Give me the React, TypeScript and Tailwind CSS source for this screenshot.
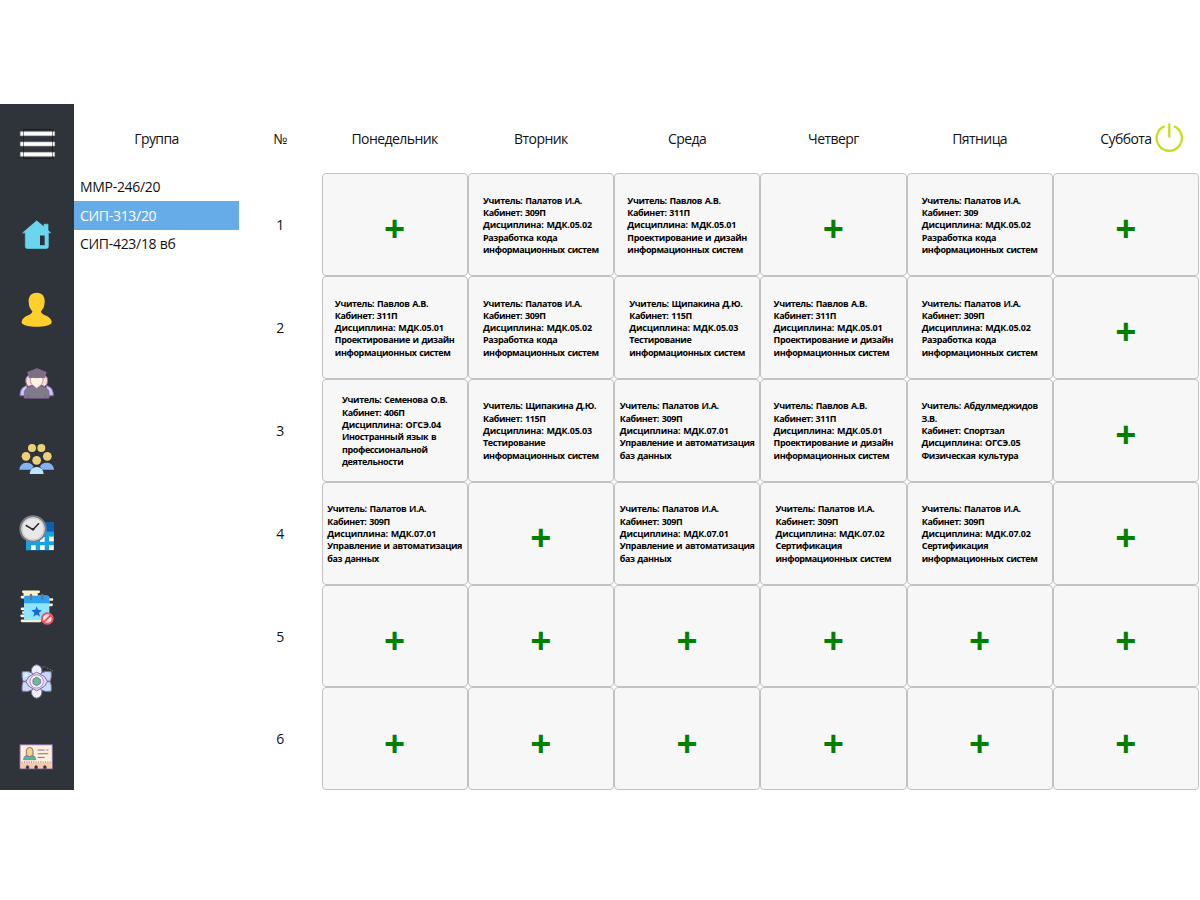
import type { ReactNode } from "react";

const days = ["Понедельник", "Вторник", "Среда", "Четверг", "Пятница", "Суббота"];
const groups = ["ММР-246/20", "СИП-313/20", "СИП-423/18 вб"];

const lesson = (teacher: string, room: string, code: string, ...title: string[]) => [
  ...teacher.split("|").map((t, i) => (i === 0 ? `Учитель: ${t}` : t)),
  `Кабинет: ${room}`,
  `Дисциплина: ${code}`,
  ...title,
];

const IS = "информационных систем";
const dev = (room = "309П") => lesson("Палатов И.А.", room, "МДК.05.02", "Разработка кода", IS);
const design = lesson("Павлов А.В.", "311П", "МДК.05.01", "Проектирование и дизайн", IS);
const testing = lesson("Щипакина Д.Ю.", "115П", "МДК.05.03", "Тестирование", IS);
const control = lesson("Палатов И.А.", "309П", "МДК.07.01", "Управление и автоматизация", "баз данных");
const cert = lesson("Палатов И.А.", "309П", "МДК.07.02", "Сертификация", IS);
const foreign = lesson("Семенова О.В.", "406П", "ОГСЭ.04", "Иностранный язык в", "профессиональной", "деятельности");
const sport = lesson("Абдулмеджидов|З.В.", "Спортзал", "ОГСЭ.05", "Физическая культура");

const rows: (string[] | null)[][] = [
  [null, dev(), design, null, dev("309"), null],
  [design, dev(), testing, design, dev(), null],
  [foreign, testing, control, design, sport, null],
  [control, null, control, cert, cert, null],
  [null, null, null, null, null, null],
  [null, null, null, null, null, null],
];

function Icon({ top, children }: { top: number; children: ReactNode }) {
  return (
    <svg className="h-[74.4px] w-[74px] shrink-0" viewBox={`0 ${top} 222 223.2`}>
      {children}
    </svg>
  );
}

function Sidebar() {
  return (
    <nav className="flex h-[686px] w-[74px] shrink-0 flex-col overflow-hidden bg-[#2f343b]">
      <svg className="h-[93.8px] w-[74px] shrink-0" viewBox="0 12 222 281.4">
        <g fill="#fff" stroke="#b9b4b4" strokeWidth="2">
          <rect x="61" y="95" width="103" height="12" rx="1" />
          <rect x="61" y="126" width="103" height="12" rx="1" />
          <rect x="61" y="157" width="103" height="12" rx="1" />
        </g>
        <rect x="70.5" y="88.5" width="87" height="87" fill="none" stroke="#0c0e10" strokeWidth="3" strokeDasharray="3 3" />
      </svg>
      <Icon top={-6.6}>
        <path d="M110 62 L132 80 V72 H144 V90 L152 98 H145 V139 Q145 145 139 145 H82 Q76 145 76 139 V98 H68 Z" fill="#69d6ed" stroke="#69d6ed" strokeWidth="2" strokeLinejoin="round" />
        <rect x="120" y="106" width="14" height="29" fill="#2b3037" />
      </Icon>
      <Icon top={216.6}>
        <path d="M110 279 C127 279 135 291 134 306 C134 319 129 329 123 334 C124 342 132 344 142 349 C151 354 156 362 155 369 C149 385 71 385 65 369 C64 362 69 354 78 349 C88 344 96 342 97 334 C91 329 86 319 86 306 C85 291 93 279 110 279 Z" fill="#ffd02c" />
      </Icon>
      <Icon top={-10.2}>
        <path d="M60 136 Q60 115 72 109 L80 105 L90 136 Z M160 136 Q160 115 148 109 L140 105 L130 136 Z" fill="#b9cdfa" stroke="#8d659f" strokeWidth="3" />
        <path d="M87 74 Q76 79 77 91 Q77 103 86 108 L98 104 V76 Z M133 74 Q144 79 143 91 Q143 103 134 108 L122 104 V76 Z" fill="#fbdfd3" stroke="#8d659f" strokeWidth="3" />
        <path d="M73 143 V129 Q73 115 86 111 L102 106 H118 L134 111 Q147 115 147 129 V143 Z" fill="#7e7c88" stroke="#8d659f" strokeWidth="3" />
        <path d="M91 82 Q110 77 129 82 V91 Q127 104 119 107 L110 114 L101 107 Q93 104 91 91 Z" fill="#fff2de" stroke="#8d659f" strokeWidth="2" />
        <path d="M82 66 L98 60 L111 55 L124 60 L139 66 L135 74 V82 Q122 79 110 82 Q98 79 87 82 V74 Z" fill="#77727f" stroke="#8d659f" strokeWidth="3" />
        <path d="M88 69 L110 73 L132 69" fill="none" stroke="#8d659f" strokeWidth="2" />
        <path d="M84 134 V141 M136 134 V141" stroke="#675a72" strokeWidth="2" />
      </Icon>
      <Icon top={213}>
        <g fill="#ecd178">
          <circle cx="96" cy="294" r="12" />
          <circle cx="124" cy="294" r="12" />
          <circle cx="78" cy="319" r="13" />
          <circle cx="142" cy="319" r="13" />
          <circle cx="110" cy="331" r="13" />
        </g>
        <path d="M58 359 Q60 339 79 338 Q96 338 100 350 L92 359 Z M162 359 Q160 339 141 338 Q124 338 120 350 L128 359 Z" fill="#84b3f2" />
        <path d="M89 372 Q91 351 110 351 Q129 351 131 372 Z" fill="#bde4ff" />
      </Icon>
      <Icon top={-13.8}>
        <rect x="78" y="69" width="84" height="83" fill="#15a2e8" />
        <path d="M130 69 H162 V96 H130 Z" fill="#0761b5" />
        <g fill="#fff">
          <rect x="147" y="111" width="14" height="14" />
          <rect x="120" y="112" width="14" height="15" />
          <rect x="93" y="137" width="14" height="14" />
          <rect x="120" y="137" width="14" height="14" />
          <rect x="147" y="137" width="14" height="14" />
        </g>
        <circle cx="99" cy="88" r="38" fill="#e8e8e9" stroke="#7b8084" strokeWidth="6" />
        <circle cx="99" cy="88" r="33" fill="none" stroke="#c5c8cb" strokeWidth="3" />
        <path d="M77 77 L99 90 L117 71" fill="none" stroke="#282a2d" strokeWidth="4.5" />
        <circle cx="99" cy="89" r="4" fill="#282a2d" />
      </Icon>
      <Icon top={209.4}>
        <g stroke="#fff0cf" strokeWidth="8" strokeLinecap="round">
          <path d="M70 275 H116 M66 291 H140 M74 283 H110 M135 298 H156 M140 314 H155 M66 326 H80 M70 337 H80 M65 347 H82 M66 362 H120" />
        </g>
        <rect x="72" y="287" width="76" height="73" rx="5" fill="#8ee5ff" />
        <path d="M72 309 V293 Q72 287 78 287 H142 Q148 287 148 293 V309 Z" fill="#2da1f4" />
        <path d="M93 284 V297 M127 284 V297" stroke="#6d7680" strokeWidth="7" strokeLinecap="round" />
        <path d="M110 318 L114 329 L126 330 L117 338 L120 350 L110 343 L100 350 L103 338 L94 330 L106 329 Z" fill="#1469dd" />
        <circle cx="142" cy="355" r="16" fill="#ffe3e5" stroke="#f4505e" strokeWidth="6" />
        <path d="M132 365 L152 345" stroke="#f4505e" strokeWidth="6" />
      </Icon>
      <Icon top={-17.4}>
        <g stroke="#8b67a5" strokeWidth="3" strokeLinejoin="round">
          <path d="M110 45 Q125 47 126 64 L122 78 H98 L94 64 Q95 47 110 45 Z" fill="#eaf0ff" />
          <path d="M110 145 Q125 143 126 126 L122 112 H98 L94 126 Q95 143 110 145 Z" fill="#eaf0ff" />
          <path d="M67 66 Q84 62 97 70 L101 76 L88 94 L69 94 Q65 83 66 70 Z" fill="#bce5fa" />
          <path d="M153 66 Q136 62 123 70 L119 76 L132 94 L151 94 Q155 83 154 70 Z" fill="#c4d8fa" />
          <path d="M67 124 Q84 128 97 120 L101 114 L88 96 L69 96 Q65 107 66 120 Z" fill="#c9dcfa" />
          <path d="M153 124 Q136 128 123 120 L119 114 L132 96 L151 96 Q155 107 154 120 Z" fill="#bce5fa" />
          <path d="M110 67 L134 81 L142 95 L134 109 L110 123 L86 109 L78 95 L86 81 Z" fill="#e0def2" />
          <circle cx="110" cy="95" r="20" fill="#f1eff9" strokeWidth="2" />
          <path d="M110 82 L121 89 V101 L110 108 L99 101 V89 Z" fill="#5cc48e" />
        </g>
        <path d="M120 51 H137 M141 55 H145 M150 59 H153 M155 63 H159" stroke="#8b67a5" strokeWidth="3" strokeDasharray="4 3" />
        <path d="M78 71 V81 M73 76 H83" stroke="#fff" strokeWidth="3" />
      </Icon>
      <Icon top={205.8}>
        <rect x="60" y="283" width="97" height="72" fill="#fff0dc" stroke="#8b659e" strokeWidth="3" />
        <rect x="62" y="337" width="93" height="17" fill="#f4c9a4" />
        <path d="M65 335 H154" stroke="#805d90" strokeWidth="3" strokeDasharray="3 4" />
        <path d="M70 328 Q71 316 83 314 H94 Q107 316 108 328 Z" fill="#52b996" stroke="#8b659e" strokeWidth="2" />
        <path d="M79 315 V301 Q80 291 88 291 Q98 291 99 301 V315 L89 319 Z" fill="#f7d477" stroke="#8b659e" strokeWidth="3" />
        <path d="M113 299 H134 M139 299 H145 M113 310 H145 M113 321 H134" stroke="#8b659e" strokeWidth="3" />
        <path d="M78 355 V348 Q82 342 87 348 V355 M104 355 V348 Q108 342 113 348 V355 M130 355 V348 Q134 342 139 348 V355" fill="#2f343b" stroke="#805d90" strokeWidth="2" />
      </Icon>
    </nav>
  );
}

function Cell({ lines }: { lines: string[] | null }) {
  return (
    <button className="flex min-w-0 items-center justify-center rounded-[4px] border border-[#c2c2c2] bg-[#f7f7f7]">
      {lines ? (
        <span className="block pt-[2px] text-left text-[9px] leading-[12.3px] font-bold tracking-[-0.39px] [word-spacing:0.8px] whitespace-nowrap text-black">
          {lines.map((line) => (
            <span key={line} className={line.startsWith("Дисциплина") ? "block tracking-[-0.2px]" : "block"}>
              {line}
            </span>
          ))}
        </span>
      ) : (
        <span className="pt-[8px] text-[37px] leading-[40px] font-bold text-[#008000]">+</span>
      )}
    </button>
  );
}

export default function App() {
  return (
    <div className="h-[900px] w-[1200px] overflow-hidden bg-white pt-[104px] font-['Open_Sans','Noto_Sans',sans-serif] text-[14px] text-[#111]">
      <div className="flex h-[686px]">
        <Sidebar />
        <aside className="w-[165px] shrink-0">
          <h2 className="flex h-[68.4px] items-center justify-center pt-[1px] tracking-[-0.56px]">Группа</h2>
          <ul className="tracking-[-0.3px]">
            {groups.map((group, i) => (
              <li
                key={group}
                className={`flex h-[28.6px] items-center pl-[6px] ${i === 1 ? "bg-[#66ace8] text-white" : ""}`}
              >
                {group}
              </li>
            ))}
          </ul>
        </aside>
        <section className="relative w-[960px]">
          <header className="grid h-[69px] grid-cols-[82.5px_repeat(6,146.25px)] items-center text-center tracking-[-0.56px]">
            <span>№</span>
            {days.map((day) => (
              <span key={day}>{day}</span>
            ))}
          </header>
          {rows.map((row, i) => (
            <div key={i} className="grid h-[102.9px] grid-cols-[82.5px_repeat(6,146.25px)]">
              <span className="flex items-center justify-center">{i + 1}</span>
              {row.map((lines, j) => (
                <Cell key={j} lines={lines} />
              ))}
            </div>
          ))}
          <svg className="absolute top-[18px] left-[916px] h-[32px] w-[30px]" viewBox="0 0 30 32" fill="none" stroke="#c8dc1e" strokeWidth="2.3">
            <path d="M9.6 4.3 A12.7 12.7 0 1 0 18.9 4.3 M14.3 1.5 V15.5" />
          </svg>
        </section>
      </div>
    </div>
  );
}
